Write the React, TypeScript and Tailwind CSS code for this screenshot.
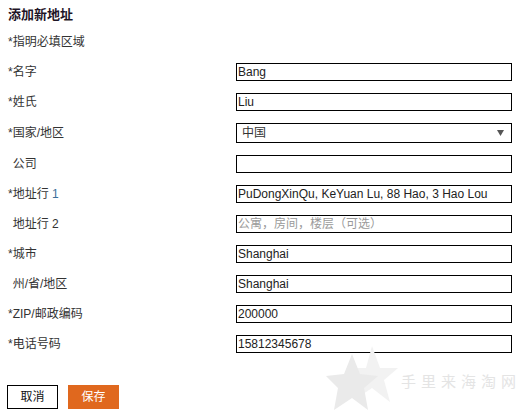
import React from "react";

const font = { fontFamily: '"Liberation Sans", Arial, "Noto Sans CJK SC", sans-serif' };

function Label({ req, children }: { req: boolean; children: React.ReactNode }) {
  return (
    <div className="w-[228px] shrink-0 text-[12px] leading-[16px] text-[#333]">
      <span className={req ? "" : "invisible"}>*</span>
      {children}
    </div>
  );
}

function TextRow({ req, label, value, placeholder }: { req: boolean; label: React.ReactNode; value?: string; placeholder?: string }) {
  return (
    <div className="flex items-center h-[18px]">
      <Label req={req}>{label}</Label>
      <div className="w-[276px] h-[18px] border border-black bg-white flex items-center px-[1px] text-[12px] leading-[16px] text-[#222] whitespace-nowrap overflow-hidden">
        {value ? value : <span className="text-[#9a9a9a]">{placeholder}</span>}
      </div>
    </div>
  );
}

export default function App() {
  return (
    <div className="relative w-[526px] h-[420px] bg-white overflow-hidden" style={font}>
      <div className="pl-[8px] pt-[7px] flex flex-col">
        <div className="text-[13px] leading-[16px] font-bold text-[#1e1426]">添加新地址</div>
        <div className="mt-[11px] text-[12px] leading-[16px] text-[#333]">*指明必填区域</div>
        <div className="mt-[13px] flex flex-col gap-[12px]">
          <TextRow req label="名字" value="Bang" />
          <TextRow req label="姓氏" value="Liu" />
          <div className="flex items-center h-[20px]">
            <Label req>国家/地区</Label>
            <div className="w-[276px] h-[20px] border border-black bg-white flex items-center justify-between pl-[5px] pr-[7px] text-[12px] leading-[16px] text-[#333]">
              <span>中国</span>
              <svg width="7" height="6" viewBox="0 0 7 6"><polygon points="0,0 7,0 3.5,6" fill="#555" /></svg>
            </div>
          </div>
          <TextRow req={false} label="公司" value="" placeholder="" />
          <TextRow req label={<>地址行 <span className="text-[#3b6f9a]">1</span></>} value="PuDongXinQu, KeYuan Lu, 88 Hao, 3 Hao Lou" />
          <TextRow req={false} label="地址行 2" placeholder="公寓，房间，楼层（可选）" />
          <TextRow req label="城市" value="Shanghai" />
          <TextRow req={false} label="州/省/地区" value="Shanghai" />
          <TextRow req label="ZIP/邮政编码" value="200000" />
          <TextRow req label="电话号码" value="15812345678" />
        </div>
        <div className="mt-[32px] flex gap-[10px] ml-[-1px]">
          <button className="w-[51px] h-[24px] border border-black bg-white text-[12px] text-[#111] flex items-center justify-center">取消</button>
          <button className="w-[51px] h-[24px] bg-[#e0681e] text-[12px] text-white flex items-center justify-center">保存</button>
        </div>
      </div>
      <div className="absolute left-[326px] top-[346px] flex items-center pointer-events-none">
        <svg width="72" height="68" viewBox="0 0 72 68">
          <polygon points="46,0 54,22 72,22 58,34 64,56 46,42 28,54 34,34 20,22 40,22" fill="#f2f2f2" />
          <polygon points="26,8 34,28 52,30 38,42 42,64 26,52 8,64 12,42 0,30 18,28" fill="#eaeaea" />
        </svg>
        <div className="ml-[3px] mt-[2px] text-[15px] tracking-[5px] text-[#e4e4e4]" style={{ fontFamily: '"Noto Sans CJK SC", serif' }}>手里来海淘网</div>
      </div>
    </div>
  );
}
